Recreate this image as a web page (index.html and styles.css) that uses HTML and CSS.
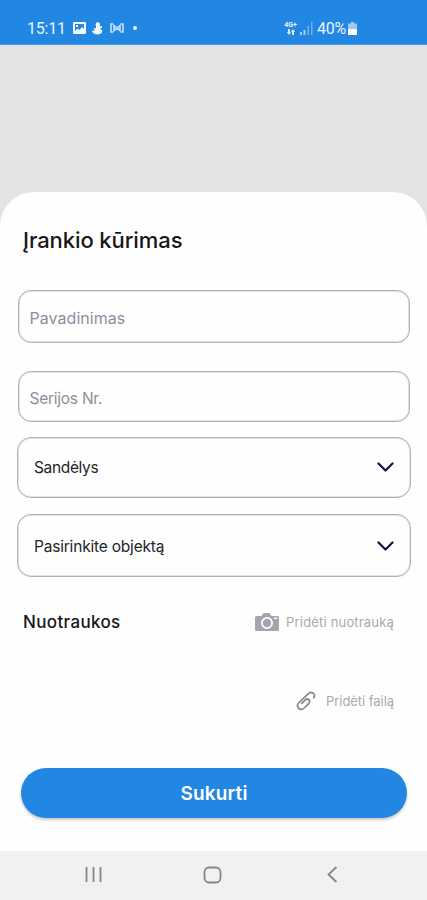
FILE: index.html
```html
<!DOCTYPE html>
<html lang="lt">
<head>
<meta charset="utf-8">
<meta name="viewport" content="width=device-width, initial-scale=1">
<title>Įrankio kūrimas</title>
<link rel="stylesheet" href="styles.css">
</head>
<body>
<div class="phone">
  <header class="status">
    <div class="status-left">
      <span class="clock">15:11</span>
      <svg class="st-image" width="13" height="12" viewBox="0 0 13 12"><path fill="#f4faff" fill-rule="evenodd" d="M1 0h11q1 0 1 1v10q0 1-1 1H1q-1 0-1-1V1q0-1 1-1zM2 2v7l2.500-2.500 2 1.500L9 5l2 2V2zM3 3h2v2H3z"/></svg>
      <svg class="st-figure" width="11" height="13" viewBox="0 0 11 13"><path fill="#f4faff" d="M6 0q2 0 2 2.500L7.500 4.500 10 4v1.500L8 7l2.500 1.500Q10 12 6 12.500 2 12.500.5 10L0 8.500l3 .5L1.500 6 4 6.500 4 4 3.500 2.500Q4 0 6 0z"/></svg>
      <svg class="st-cast" width="14" height="10" viewBox="0 0 14 10" fill="none" stroke="#c4e0fa" stroke-width="1.600"><path d="M3.500 1H1v8h2.500M10.500 1H13v8h-2.500M4 2.500 7 5 4 7.500zM10 2.500 7 5l3 2.500z"/></svg>
      <i class="dot"></i>
    </div>
    <div class="status-right">
      <span class="network"><span>4G+</span><svg width="9" height="6" viewBox="0 0 9 6"><path fill="#d6eafc" d="M2 0h2v3h1.200L3 6 .8 3H2zM6 6V3H4.800L7 0l2.200 3H8v3z"/></svg></span>
      <svg class="signal" width="13" height="13" viewBox="0 0 13 13"><path fill="#a3cef6" d="M0 10h2v3H0zM3.500 8h2v5h-2z"/><path fill="#70b2f0" d="M7.500 4h1.500v9H7.500zM11 0h1.500v13H11z"/></svg>
      <span class="battery-text">40%</span>
      <svg class="battery" width="9" height="13" viewBox="0 0 9 13"><path fill="#9ccbf6" d="M3 0h3v1.500h2q1 0 1 1V7H0V2.500q0-1 1-1h2z"/><path fill="#fff" d="M0 7h9v5q0 1-1 1H1q-1 0-1-1z"/></svg>
    </div>
  </header>

  <main class="sheet">
    <h1 class="title"><span>Įrankio kūrimas</span></h1>
    <div class="field name"><span>Pavadinimas</span></div>
    <div class="field serial"><span>Serijos Nr.</span></div>
    <div class="select store"><span>Sandėlys</span><svg width="17" height="11" viewBox="0 0 17 11"><path d="M1.500 1.500 8.500 8.500l7-7"/></svg></div>
    <div class="select object"><span>Pasirinkite objektą</span><svg width="17" height="11" viewBox="0 0 17 11"><path d="M1.500 1.500 8.500 8.500l7-7"/></svg></div>
    <div class="photos">
      <h2><span>Nuotraukos</span></h2>
      <div class="action add-photo">
        <svg width="24" height="19" viewBox="0 0 24 19"><path fill="#a5a5ad" fill-rule="evenodd" d="M1.500 3H6.500L8 .8Q8.500 0 9.500 0h4q1 0 1.500.8L16.500 3h6Q24 3 24 4.500v12q0 1.500-1.500 1.500h-21Q0 18 0 16.500v-12Q0 3 1.500 3zM12 4a6 6 0 1 0 0 12 6 6 0 0 0 0-12zm0 1.800a4.200 4.200 0 1 1 0 8.400 4.200 4.200 0 0 1 0-8.400zM19 4.500V6h3V4.500z"/></svg>
        <span>Pridėti nuotrauką</span>
      </div>
    </div>
    <div class="action add-file">
      <svg width="20" height="20" viewBox="0 0 20 20" fill="none" stroke="#85858f" stroke-width="1.700" stroke-linecap="round" stroke-linejoin="round"><path d="M17.800 6.800Q19.500 4 17.300 2.200 14.800.3 12.200 2.800L3 11.500Q.2 14.500 2.500 17.200 5.200 19.800 8.200 17l4.300-4.200Q14.600 10.500 13 8.700 11.200 7.100 9 9.200l-3.200 3.200"/></svg>
      <span>Pridėti failą</span>
    </div>
    <button class="submit" type="button"><span>Sukurti</span></button>
  </main>

  <nav class="navbar">
    <svg width="17" height="17" viewBox="0 0 17 17"><path d="M1.500 1v15M8.500 1v15M15.500 1v15"/></svg>
    <svg class="home" width="19" height="18" viewBox="0 0 19 18"><rect x="1.500" y="1.500" width="16" height="15" rx="4.500"/></svg>
    <svg width="11" height="17" viewBox="0 0 11 17"><path d="M9.500 1 1.500 8.500l8 7.500"/></svg>
  </nav>
</div>
</body>
</html>
```
FILE: styles.css
```css
* { box-sizing: border-box; }
body { margin: 0; font-family: Inter, "Liberation Sans", sans-serif; color: #17171b; background: #e3e3e3; }
svg { display: block; flex: none; }
span { white-space: nowrap; }
.phone { width: 427px; height: 900px; display: flex; flex-direction: column; overflow: hidden; }

.status { height: 45px; flex: none; background: #2287e3; border-bottom: 1px solid #4a9ce8; display: flex; justify-content: space-between; padding: 12px 70px 0 27px; color: #e8f4ff; font-family: Roboto, sans-serif; }
.status-left, .status-right { display: flex; align-items: center; height: 32px; }
.clock { font-size: 16px; width: 46px; letter-spacing: -.2px; }
.st-figure { margin-left: 6px; }
.st-cast { margin-left: 7px; }
.dot { width: 4px; height: 4px; border-radius: 50%; background: #e8f4ff; margin-left: 9px; }
.network { display: flex; flex-direction: column; align-items: center; font-size: 7px; line-height: 7px; font-weight: 700; width: 13px; }
.signal { margin-left: 3px; }
.battery-text { font-size: 16px; margin-left: 4px; width: 31px; letter-spacing: -.3px; }

.sheet { margin-top: 147px; height: 659px; flex: none; background: #fefefe; border-radius: 34px 34px 0 0; padding: 34px 16px 0 17px; display: flex; flex-direction: column; }
.title { margin: 0 0 36px 6px; height: 28px; font-size: 22px; line-height: 28px; font-weight: 500; letter-spacing: -.1px; }
.field, .select { border: 1px solid #b0b0b6; box-shadow: inset 0 0 0 1px #e3e3e6; display: flex; align-items: center; }
.field { margin: 0 1px; border-radius: 13px; padding: 2px 11px 0 10.500px; color: #8e8e9b; font-size: 16px; letter-spacing: .05px; }
.name { height: 53px; }
.serial { height: 51px; margin-top: 28px; padding-top: 4px; font-size: 15.500px; letter-spacing: -.25px; }
.select { border-radius: 14px; justify-content: space-between; padding: 0 16px; font-size: 15.500px; letter-spacing: -.2px; color: #242428; }
.select path { fill: none; stroke: #15113d; stroke-width: 2.200; stroke-linecap: round; stroke-linejoin: round; }
.store { height: 61px; margin-top: 15px; }
.store span { letter-spacing: -.35px; }
.object { height: 63px; margin-top: 16px; padding-top: 1px; }
.photos { margin: 33px 17px 0 6px; height: 24px; display: flex; align-items: center; justify-content: space-between; }
h2 { margin: 0; font-size: 17px; font-weight: 500; letter-spacing: .35px; }
.action { display: flex; align-items: center; color: #a9a9b1; font-size: 13px; }
.add-photo { gap: 7px; letter-spacing: .18px; }
.add-file { height: 24px; margin: 55px 17px 0 0; justify-content: flex-end; gap: 10px; letter-spacing: -.05px; }
.submit { margin: 55px 4px 0; height: 50px; border: 0; border-radius: 25px; background: #2287e3; color: #fff; font: 600 19px Inter, sans-serif; letter-spacing: .15px; box-shadow: 0 2px 3px rgba(0,0,0,.22); }

.navbar { flex: 1; background: #f1f1f1; display: flex; align-items: center; padding: 0 89px 2px 85px; }
.navbar svg { fill: none; stroke: #858585; stroke-width: 1.800; }
.navbar .home { margin: 0 auto 0 101px; }
```
